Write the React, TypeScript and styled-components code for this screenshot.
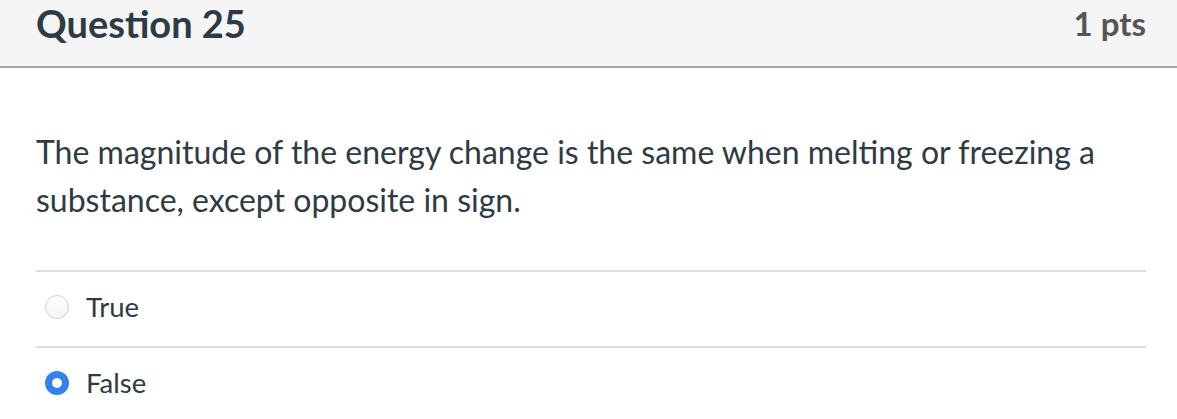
import React from "react";
import styled, { createGlobalStyle } from "styled-components";

const Global = createGlobalStyle`
  html, body { margin: 0; padding: 0; background: #ffffff; }
  body { font-family: Lato, "Open Sans", sans-serif; color: #2d3b45; }
`;

const Page = styled.div`
  width: 1177px;
  height: 419px;
  overflow: hidden;
  background: #ffffff;
`;

const Header = styled.header`
  display: flex;
  align-items: center;
  justify-content: space-between;
  height: 66px;
  padding: 0 31px 0 36px;
  background: #f5f5f5;
  border-bottom: 2px solid #a7a7a7;
  box-sizing: content-box;
`;

const Title = styled.h2`
  margin: 0;
  margin-top: -21px;
  font-size: 38px;
  font-weight: 700;
  color: #2d3b45;
`;

const Points = styled.div`
  margin-top: -21px;
  font-size: 33px;
  font-weight: 700;
  color: #555555;
`;

const Body = styled.div`
  padding: 0 31px 0 36px;
`;

const QuestionText = styled.p`
  margin: 60px 0 0;
  font-size: 32px;
  line-height: 48px;
  color: #2d3b45;
`;

const Answers = styled.div`
  margin-top: 46px;
  display: flex;
  flex-direction: column;
`;

const Answer = styled.label`
  display: flex;
  align-items: center;
  gap: 17px;
  height: 68px;
  padding: 0 0 6px 9px;
  border-top: 2px solid #dddddd;
  font-size: 27.5px;
  color: #2d3b45;
`;

const Radio = styled.span<{ $checked?: boolean }>`
  box-sizing: border-box;
  width: 24px;
  height: 24px;
  border-radius: 50%;
  flex: none;
  margin-top: 2px;
  ${(p) =>
    p.$checked
      ? `background: #3282f7; border: 7px solid #3282f7;
         display:flex;align-items:center;justify-content:center;`
      : `background: linear-gradient(#ffffff, #f4f4f4); border: 1px solid #cfcfcf;`}
`;

const Dot = styled.span`
  width: 10px;
  height: 10px;
  border-radius: 50%;
  background: #ffffff;
`;

export default function App() {
  return (
    <Page>
      <Global />
      <Header>
        <Title>Question 25</Title>
        <Points>1 pts</Points>
      </Header>
      <Body>
        <QuestionText>
          The magnitude of the energy change is the same when melting or freezing a
          substance, except opposite in sign.
        </QuestionText>
        <Answers>
          <Answer>
            <Radio />
            True
          </Answer>
          <Answer>
            <Radio $checked>
              <Dot />
            </Radio>
            False
          </Answer>
        </Answers>
      </Body>
    </Page>
  );
}
